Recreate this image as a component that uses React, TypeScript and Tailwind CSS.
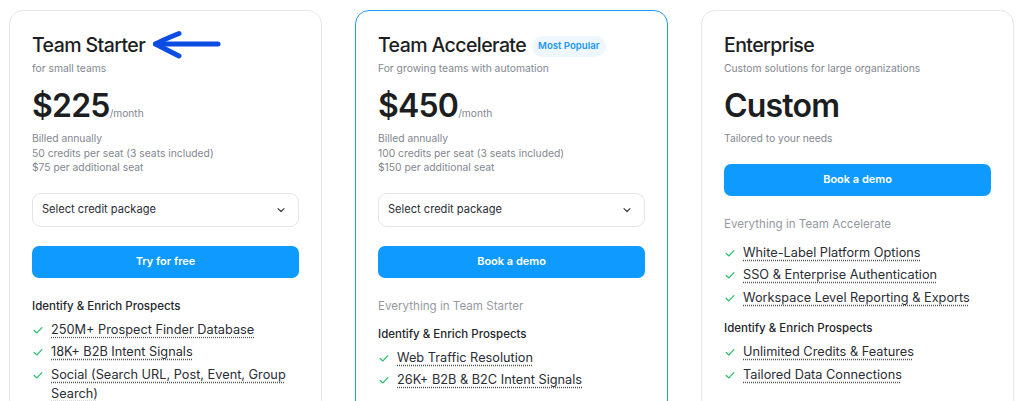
import React from 'react';

type Group = { heading: string; items: string[] };

interface Plan {
    name: string;
    badge?: string;
    tagline: string;
    price: string;
    period?: string;
    notes: string[];
    showSelect: boolean;
    cta: string;
    inherits?: string;
    groups: Group[];
    highlighted?: boolean;
    arrow?: boolean;
}

const plans: Plan[] = [
    {
        name: 'Team Starter',
        tagline: 'for small teams',
        price: '$225',
        period: '/month',
        notes: ['Billed annually', '50 credits per seat (3 seats included)', '$75 per additional seat'],
        showSelect: true,
        cta: 'Try for free',
        arrow: true,
        groups: [
            {
                heading: 'Identify & Enrich Prospects',
                items: [
                    '250M+ Prospect Finder Database',
                    '18K+ B2B Intent Signals',
                    'Social (Search URL, Post, Event, Group Search)',
                ],
            },
        ],
    },
    {
        name: 'Team Accelerate',
        badge: 'Most Popular',
        tagline: 'For growing teams with automation',
        price: '$450',
        period: '/month',
        notes: ['Billed annually', '100 credits per seat (3 seats included)', '$150 per additional seat'],
        showSelect: true,
        cta: 'Book a demo',
        inherits: 'Everything in Team Starter',
        highlighted: true,
        groups: [
            {
                heading: 'Identify & Enrich Prospects',
                items: ['Web Traffic Resolution', '26K+ B2B & B2C Intent Signals'],
            },
        ],
    },
    {
        name: 'Enterprise',
        tagline: 'Custom solutions for large organizations',
        price: 'Custom',
        notes: ['Tailored to your needs'],
        showSelect: false,
        cta: 'Book a demo',
        inherits: 'Everything in Team Accelerate',
        groups: [
            {
                heading: '',
                items: [
                    'White-Label Platform Options',
                    'SSO & Enterprise Authentication',
                    'Workspace Level Reporting & Exports',
                ],
            },
            {
                heading: 'Identify & Enrich Prospects',
                items: ['Unlimited Credits & Features', 'Tailored Data Connections'],
            },
        ],
    },
];

const CheckIcon = () => (
    <svg width="10" height="10" viewBox="0 0 10 10" fill="none" className="shrink-0 mt-[5px]">
        <path d="M1.2 5.4 L3.9 7.9 L8.9 2.6" stroke="#2fbf71" strokeWidth="1.3" strokeLinecap="round" strokeLinejoin="round" />
    </svg>
);

// hand-drawn pointer from the screenshot annotation
const Arrow = () => (
    <svg width="72" height="30" viewBox="0 0 72 30" fill="none" className="ml-[6px] shrink-0">
        <path d="M4.5 14 L67 14" stroke="#0b4de3" strokeWidth="5" strokeLinecap="round" />
        <path d="M28 3.5 Q14 9 4.5 14 Q14 19 28 26" stroke="#0b4de3" strokeWidth="5" strokeLinecap="round" strokeLinejoin="round" />
    </svg>
);

const PlanCard = ({ plan }: { plan: Plan }) => (
    <div
        className={`rounded-[14px] border bg-white p-[22px] pb-[40px] ${
            plan.highlighted ? 'border-[#1d9bf9]' : 'border-[#e6e7ea]'
        }`}
    >
        <div className="flex items-center h-[24px]">
            <h3 className="text-[19.5px] leading-[24px] font-medium tracking-[-0.03em] text-[#1c1e22]">{plan.name}</h3>
            {plan.badge && (
                <span className="ml-[6px] mt-[2px] rounded-full bg-[#eef6ff] px-[6px] h-[21px] flex items-center text-[9.6px] font-semibold text-[#1a97f5]">
                    {plan.badge}
                </span>
            )}
            {plan.arrow && <Arrow />}
        </div>
        <p className="mt-[3px] text-[10.3px] leading-[16px] text-[#82878f]">{plan.tagline}</p>

        <div className="mt-[10px] flex items-baseline h-[40px]">
            <span className="text-[32px] leading-[40px] font-semibold tracking-[-0.025em] text-[#1c1e22]">{plan.price}</span>
            {plan.period && <span className="text-[10.2px] text-[#82878f]">{plan.period}</span>}
        </div>
        <div className="mt-[5px] text-[10.3px] leading-[14.5px] text-[#82878f]">
            {plan.notes.map(n => (
                <p key={n}>{n}</p>
            ))}
        </div>

        {plan.showSelect && (
            <button className="mt-[18px] flex w-full h-[34px] items-center justify-between rounded-[9px] border border-[#e3e5e8] bg-white pl-[9px] pr-[12px] text-[11.1px] text-[#2a2d33]">
                <span>Select credit package</span>
                <svg width="10" height="10" viewBox="0 0 10 10" fill="none">
                    <path d="M2 3.6 L5 6.5 L8 3.6" stroke="#3a3d44" strokeWidth="1.2" strokeLinecap="round" strokeLinejoin="round" />
                </svg>
            </button>
        )}

        <button
            className={`${plan.showSelect ? 'mt-[19px]' : 'mt-[18px]'} w-full h-[32px] rounded-[7px] bg-[#0e9aff] text-[11px] font-semibold text-white`}
        >
            {plan.cta}
        </button>

        <div className="mt-[19px]">
            {plan.inherits && (
                <p className="mb-[10px] text-[11.6px] leading-[18px] text-[#959aa1]">{plan.inherits}</p>
            )}
            <div className="flex flex-col gap-[12px]">
                {plan.groups.map((g, gi) => (
                    <div key={gi}>
                        {g.heading && (
                            <p className="mb-[5px] text-[11.5px] leading-[18px] font-medium text-[#23262b]">{g.heading}</p>
                        )}
                        <ul className="flex flex-col gap-[3px]">
                            {g.items.map(item => (
                                <li key={item} className="flex gap-[8px] pl-[1px]">
                                    <CheckIcon />
                                    <span className="text-[12.75px] leading-[19.5px] text-[#2a2d33] underline decoration-dotted decoration-[#555] underline-offset-[3px]">
                                        {item}
                                    </span>
                                </li>
                            ))}
                        </ul>
                    </div>
                ))}
            </div>
        </div>
    </div>
);

export default function App() {
    return (
        <div className="min-h-screen bg-white pl-[9px] pr-[8px] pt-[10px]" style={{ fontFamily: 'Inter, "Noto Sans", sans-serif' }}>
            <div className="grid grid-cols-3 gap-[33px]">
                {plans.map(p => (
                    <PlanCard key={p.name} plan={p} />
                ))}
            </div>
        </div>
    );
}
